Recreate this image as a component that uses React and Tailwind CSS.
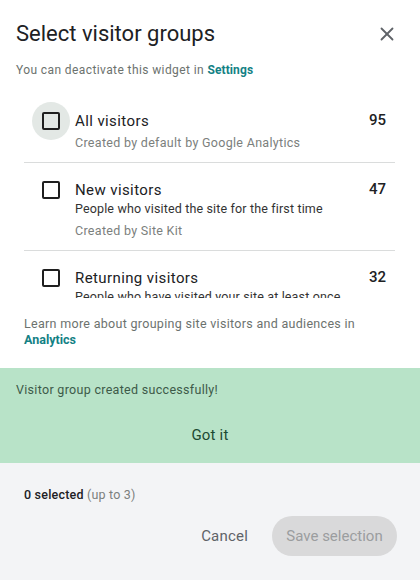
import { X } from 'lucide-react'

const groups = [
  { name: 'All visitors', count: 95, desc: null, created: 'Created by default by Google Analytics', focused: true },
  { name: 'New visitors', count: 47, desc: 'People who visited the site for the first time', created: 'Created by Site Kit' },
  { name: 'Returning visitors', count: 32, desc: 'People who have visited your site at least once before', created: 'Created by Site Kit' },
]

function Checkbox({ focused }) {
  return (
    <div className="relative w-10 h-[22px] flex items-center justify-center shrink-0">
      {focused && <div className="absolute w-[38px] h-[38px] rounded-full bg-[#e3e8e5]" />}
      <div className="relative w-[18px] h-[18px] border-2 border-[#1f1f1f] rounded-[2px]" />
    </div>
  )
}

export default function App() {
  return (
    <div className="w-[420px] h-[580px] bg-white flex flex-col overflow-hidden" style={{ fontFamily: 'Roboto, "Open Sans", sans-serif' }}>
      {/* Header */}
      <div className="flex items-center justify-between pl-4 pr-[22px] pt-[20px]">
        <h1 className="text-[22px] leading-[28px] text-[#202124]">Select visitor groups</h1>
        <X size={22} strokeWidth={2} className="text-[#5f6368]" />
      </div>
      <p className="px-4 mt-[14px] text-[12px] leading-[16px] tracking-[0.4px] text-[#6c726e]">
        You can deactivate this widget in <span className="font-bold text-[#138185] tracking-[0.1px]">Settings</span>
      </p>

      {/* List */}
      <div className="ml-6 mr-[25px] mt-[16px] h-[204px] overflow-hidden">
        {groups.map((g, i) => (
          <div key={g.name} className={`flex items-start pl-[7px] pr-[9px] pt-4 pb-[11px] ${i < groups.length - 1 ? 'border-b border-[#dadcdc]' : ''}`}>
            <Checkbox focused={g.focused} />
            <div className="ml-1 flex-1">
              <div className="text-[15px] leading-[22px] text-[#202124] tracking-[0.4px]">{g.name}</div>
              {g.desc && <div className="text-[12.5px] leading-[16px] tracking-[0.15px] text-[#333]">{g.desc}</div>}
              <div className={`text-[12.5px] leading-[16px] tracking-[0.3px] text-[#7b807d] ${g.desc ? 'mt-[6px]' : 'mt-[3px]'}`}>{g.created}</div>
            </div>
            <div className="text-[15px] leading-[20px] font-medium text-[#202124]">{g.count}</div>
          </div>
        ))}
      </div>

      <p className="px-6 mt-[18px] text-[12.5px] leading-[16px] tracking-[0.3px] text-[#6c726e]">
        Learn more about grouping site visitors and audiences in <span className="font-bold text-[#138185] tracking-normal">Analytics</span>
      </p>

      {/* Success banner */}
      <div className="mt-auto bg-[#b8e3c8] h-[95px] flex flex-col">
        <p className="px-4 mt-[14px] text-[12.5px] leading-[16px] tracking-[0.3px] text-[#3d5a48]">Visitor group created successfully!</p>
        <div className="mt-[27px] text-center text-[15px] leading-[20px] tracking-[0.2px] text-[#1d4a33]">Got it</div>
      </div>

      {/* Footer */}
      <div className="bg-[#f3f4f6] h-[117px] flex flex-col px-6 shrink-0">
        <p className="mt-[24px] text-[12.5px] leading-[16px] tracking-[0.2px] text-[#202124]">
          <span className="font-medium">0 selected</span> <span className="text-[#7b807d]">(up to 3)</span>
        </p>
        <div className="flex items-center justify-end mt-[13px] -mr-[1px]">
          <button className="text-[15px] tracking-[0.2px] text-[#5f6368] mr-[24px]">Cancel</button>
          <button className="h-10 w-[125px] rounded-full bg-[#d9d9da] text-[15px] text-[#9b9d9f]">Save selection</button>
        </div>
      </div>
    </div>
  )
}
